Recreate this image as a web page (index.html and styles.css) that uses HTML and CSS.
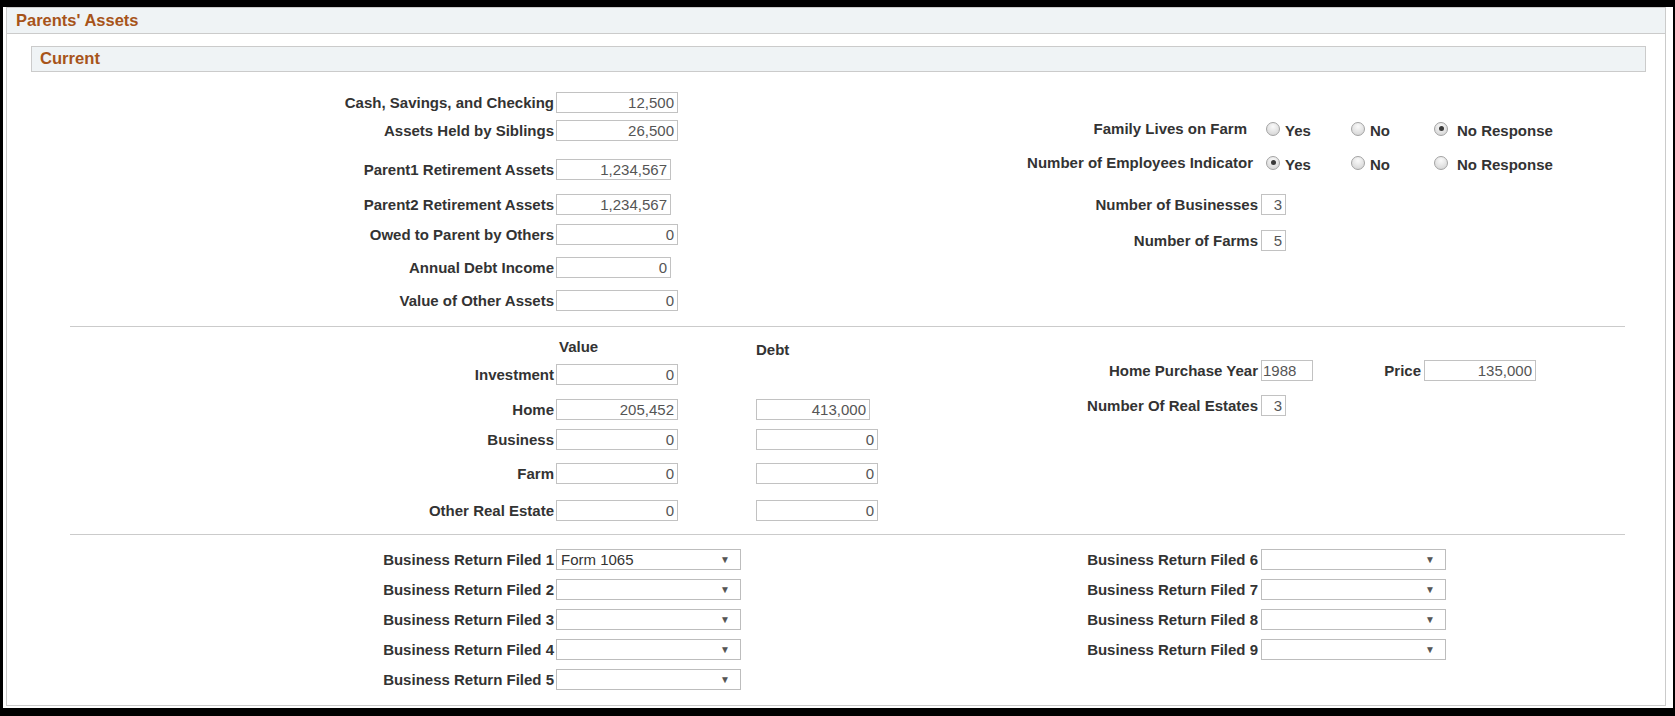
FILE: index.html
```html
<!DOCTYPE html>
<html lang="en">
<head>
<meta charset="utf-8">
<title>Parents' Assets</title>
<link rel="stylesheet" href="styles.css">
</head>
<body>
<div class="frame">
  <div class="box">
    <div class="hdr">Parents' Assets</div>
    <div class="sub">Current</div>

    <div class="sec">
      <div class="lcol">
        <div class="row mt20"><span class="lbl">Cash, Savings, and Checking</span><span class="fld w122">12,500</span></div>
        <div class="row mt7"><span class="lbl">Assets Held by Siblings</span><span class="fld w122">26,500</span></div>
        <div class="row mt18"><span class="lbl">Parent1 Retirement Assets</span><span class="fld w115">1,234,567</span></div>
        <div class="row mt14"><span class="lbl">Parent2 Retirement Assets</span><span class="fld w115">1,234,567</span></div>
        <div class="row mt9"><span class="lbl">Owed to Parent by Others</span><span class="fld w122">0</span></div>
        <div class="row mt12"><span class="lbl">Annual Debt Income</span><span class="fld w115">0</span></div>
        <div class="row mt12"><span class="lbl">Value of Other Assets</span><span class="fld w122">0</span></div>
      </div>
      <div class="rcol">
        <div class="row mt46">
          <span class="lbl pr11">Family Lives on Farm</span>
          <div class="radios">
            <span class="opt o1"><span class="radio"></span><span class="rtxt">Yes</span></span>
            <span class="opt o2"><span class="radio"></span><span class="rtxt">No</span></span>
            <span class="opt"><span class="radio on"></span><span class="rtxt sp">No Response</span></span>
          </div>
        </div>
        <div class="row mt13">
          <span class="lbl pr5">Number of Employees Indicator</span>
          <div class="radios">
            <span class="opt o1"><span class="radio on"></span><span class="rtxt">Yes</span></span>
            <span class="opt o2"><span class="radio"></span><span class="rtxt">No</span></span>
            <span class="opt"><span class="radio"></span><span class="rtxt sp">No Response</span></span>
          </div>
        </div>
        <div class="row mt21"><span class="lbl">Number of Businesses</span><span class="fld w25">3</span></div>
        <div class="row mt15"><span class="lbl">Number of Farms</span><span class="fld w25">5</span></div>
      </div>
    </div>

    <div class="sep mt15"></div>

    <div class="sec">
      <div class="lcol">
        <div class="hrow mt9"><span class="hv">Value</span><span class="hd">Debt</span></div>
        <div class="row mt7"><span class="lbl">Investment</span><span class="fld w122">0</span></div>
        <div class="row mt14"><span class="lbl">Home</span><span class="fld w122">205,452</span><span class="fld debt w114">413,000</span></div>
        <div class="row mt9"><span class="lbl">Business</span><span class="fld w122">0</span><span class="fld debt w122">0</span></div>
        <div class="row mt13"><span class="lbl">Farm</span><span class="fld w122">0</span><span class="fld debt w122">0</span></div>
        <div class="row mt16"><span class="lbl">Other Real Estate</span><span class="fld w122">0</span><span class="fld debt w122">0</span></div>
      </div>
      <div class="rcol">
        <div class="row mt33"><span class="lbl">Home Purchase Year</span><span class="fld w52 left">1988</span><span class="plbl">Price</span><span class="fld w112">135,000</span></div>
        <div class="row mt14"><span class="lbl">Number Of Real Estates</span><span class="fld w25">3</span></div>
      </div>
    </div>

    <div class="sep mt13"></div>

    <div class="sec">
      <div class="lcol">
        <div class="row mt14"><span class="lbl">Business Return Filed 1</span><span class="sel"><span>Form 1065</span><span class="arr">&#9660;</span></span></div>
        <div class="row mt9"><span class="lbl">Business Return Filed 2</span><span class="sel"><span></span><span class="arr">&#9660;</span></span></div>
        <div class="row mt9"><span class="lbl">Business Return Filed 3</span><span class="sel"><span></span><span class="arr">&#9660;</span></span></div>
        <div class="row mt9"><span class="lbl">Business Return Filed 4</span><span class="sel"><span></span><span class="arr">&#9660;</span></span></div>
        <div class="row mt9"><span class="lbl">Business Return Filed 5</span><span class="sel"><span></span><span class="arr">&#9660;</span></span></div>
      </div>
      <div class="rcol">
        <div class="row mt14"><span class="lbl">Business Return Filed 6</span><span class="sel"><span></span><span class="arr">&#9660;</span></span></div>
        <div class="row mt9"><span class="lbl">Business Return Filed 7</span><span class="sel"><span></span><span class="arr">&#9660;</span></span></div>
        <div class="row mt9"><span class="lbl">Business Return Filed 8</span><span class="sel"><span></span><span class="arr">&#9660;</span></span></div>
        <div class="row mt9"><span class="lbl">Business Return Filed 9</span><span class="sel"><span></span><span class="arr">&#9660;</span></span></div>
      </div>
    </div>
  </div>
</div>
</body>
</html>
```
FILE: styles.css
```css
html, body {
  margin: 0;
  padding: 0;
  background: #fff;
}
body {
  font-family: "Liberation Sans", Arial, Helvetica, sans-serif;
  color: #333;
}
.frame {
  width: 1675px;
  height: 716px;
  box-sizing: border-box;
  border-style: solid;
  border-color: #000;
  border-width: 7px 2px 8px 3px;
  padding: 0 7px 2px 3px;
}
.box {
  height: 699px;
  box-sizing: border-box;
  border: 1px solid #cbcbcb;
}
.hdr {
  height: 25px;
  border-bottom: 1px solid #cbcbcb;
  background: #eff3f5;
  color: #a7541a;
  font-weight: bold;
  font-size: 16.5px;
  line-height: 25px;
  padding-left: 9px;
}
.sub {
  margin: 12px 19px 0 24px;
  height: 26px;
  box-sizing: border-box;
  border: 1px solid #cbcbcb;
  background: #eff3f5;
  color: #a7541a;
  font-weight: bold;
  font-size: 16.6px;
  line-height: 23px;
  padding-left: 8px;
}
.sec {
  display: flex;
}
.lcol {
  width: 893px;
  flex: none;
}
.rcol {
  flex: 1;
}
.row {
  display: flex;
  align-items: center;
  height: 21px;
}
.lbl {
  flex: none;
  box-sizing: border-box;
  width: 547px;
  text-align: right;
  font-weight: bold;
  font-size: 15px;
  white-space: nowrap;
  color: #333;
}
.rcol .lbl {
  width: 358px;
}
.pr11 { padding-right: 11px; }
.pr5 { padding-right: 5px; }
.fld {
  flex: none;
  box-sizing: border-box;
  height: 21px;
  border: 1px solid #c2c2c2;
  font-size: 15px;
  line-height: 19px;
  color: #555;
  text-align: right;
  padding: 0 3px;
  margin-left: 2px;
  background: #fff;
}
.rcol .fld { margin-left: 3px; }
.fld.left { text-align: left; padding-left: 1px; }
.fld.debt { margin-left: 78px; }
.w122 { width: 122px; }
.w115 { width: 115px; }
.w114 { width: 114px; }
.w112 { width: 112px; }
.w52 { width: 52px; }
.w25 { width: 25px; }
.plbl {
  flex: none;
  width: 108px;
  text-align: right;
  font-weight: bold;
  font-size: 15px;
  color: #333;
}
.radios {
  display: flex;
  align-items: center;
  margin-left: 8px;
}
.opt {
  display: flex;
  align-items: center;
}
.o1 { width: 85px; }
.o2 { width: 83px; }
.radio {
  flex: none;
  box-sizing: border-box;
  width: 14px;
  height: 14px;
  border-radius: 50%;
  border: 1px solid #a3a3a3;
  background: radial-gradient(circle at 50% 30%, #fafafa 0%, #e3e3e3 55%, #cfcfcf 100%);
  margin-right: 5px;
  position: relative;
}
.radio.on::after {
  content: "";
  position: absolute;
  left: 3.5px;
  top: 3.5px;
  width: 5px;
  height: 5px;
  border-radius: 50%;
  background: #3a3a3a;
}
.rtxt {
  font-weight: bold;
  font-size: 15px;
  color: #333;
  padding-top: 3px;
}
.rtxt.sp { margin-left: 4px; }
.hrow {
  display: flex;
  height: 21px;
  align-items: center;
  font-weight: bold;
  font-size: 15px;
  color: #333;
}
.hv {
  margin-left: 552px;
  width: 197px;
}
.hd {
  padding-top: 5px;
}
.sep {
  height: 1px;
  background: #cbcbcb;
  margin-left: 63px;
  margin-right: 40px;
}
.sel {
  flex: none;
  box-sizing: border-box;
  width: 185px;
  height: 21px;
  margin-left: 2px;
  border: 1px solid #bdbdbd;
  display: flex;
  justify-content: space-between;
  align-items: center;
  padding: 0 10px 0 4px;
  font-size: 15px;
  color: #333;
  background: #fff;
}
.rcol .sel { margin-left: 3px; }
.arr {
  font-size: 10px;
  color: #555;
}
.mt7 { margin-top: 7px; }
.mt9 { margin-top: 9px; }
.mt12 { margin-top: 12px; }
.mt13 { margin-top: 13px; }
.mt14 { margin-top: 14px; }
.mt15 { margin-top: 15px; }
.mt16 { margin-top: 16px; }
.mt18 { margin-top: 18px; }
.mt20 { margin-top: 20px; }
.mt21 { margin-top: 21px; }
.mt33 { margin-top: 33px; }
.mt46 { margin-top: 46px; }
```
